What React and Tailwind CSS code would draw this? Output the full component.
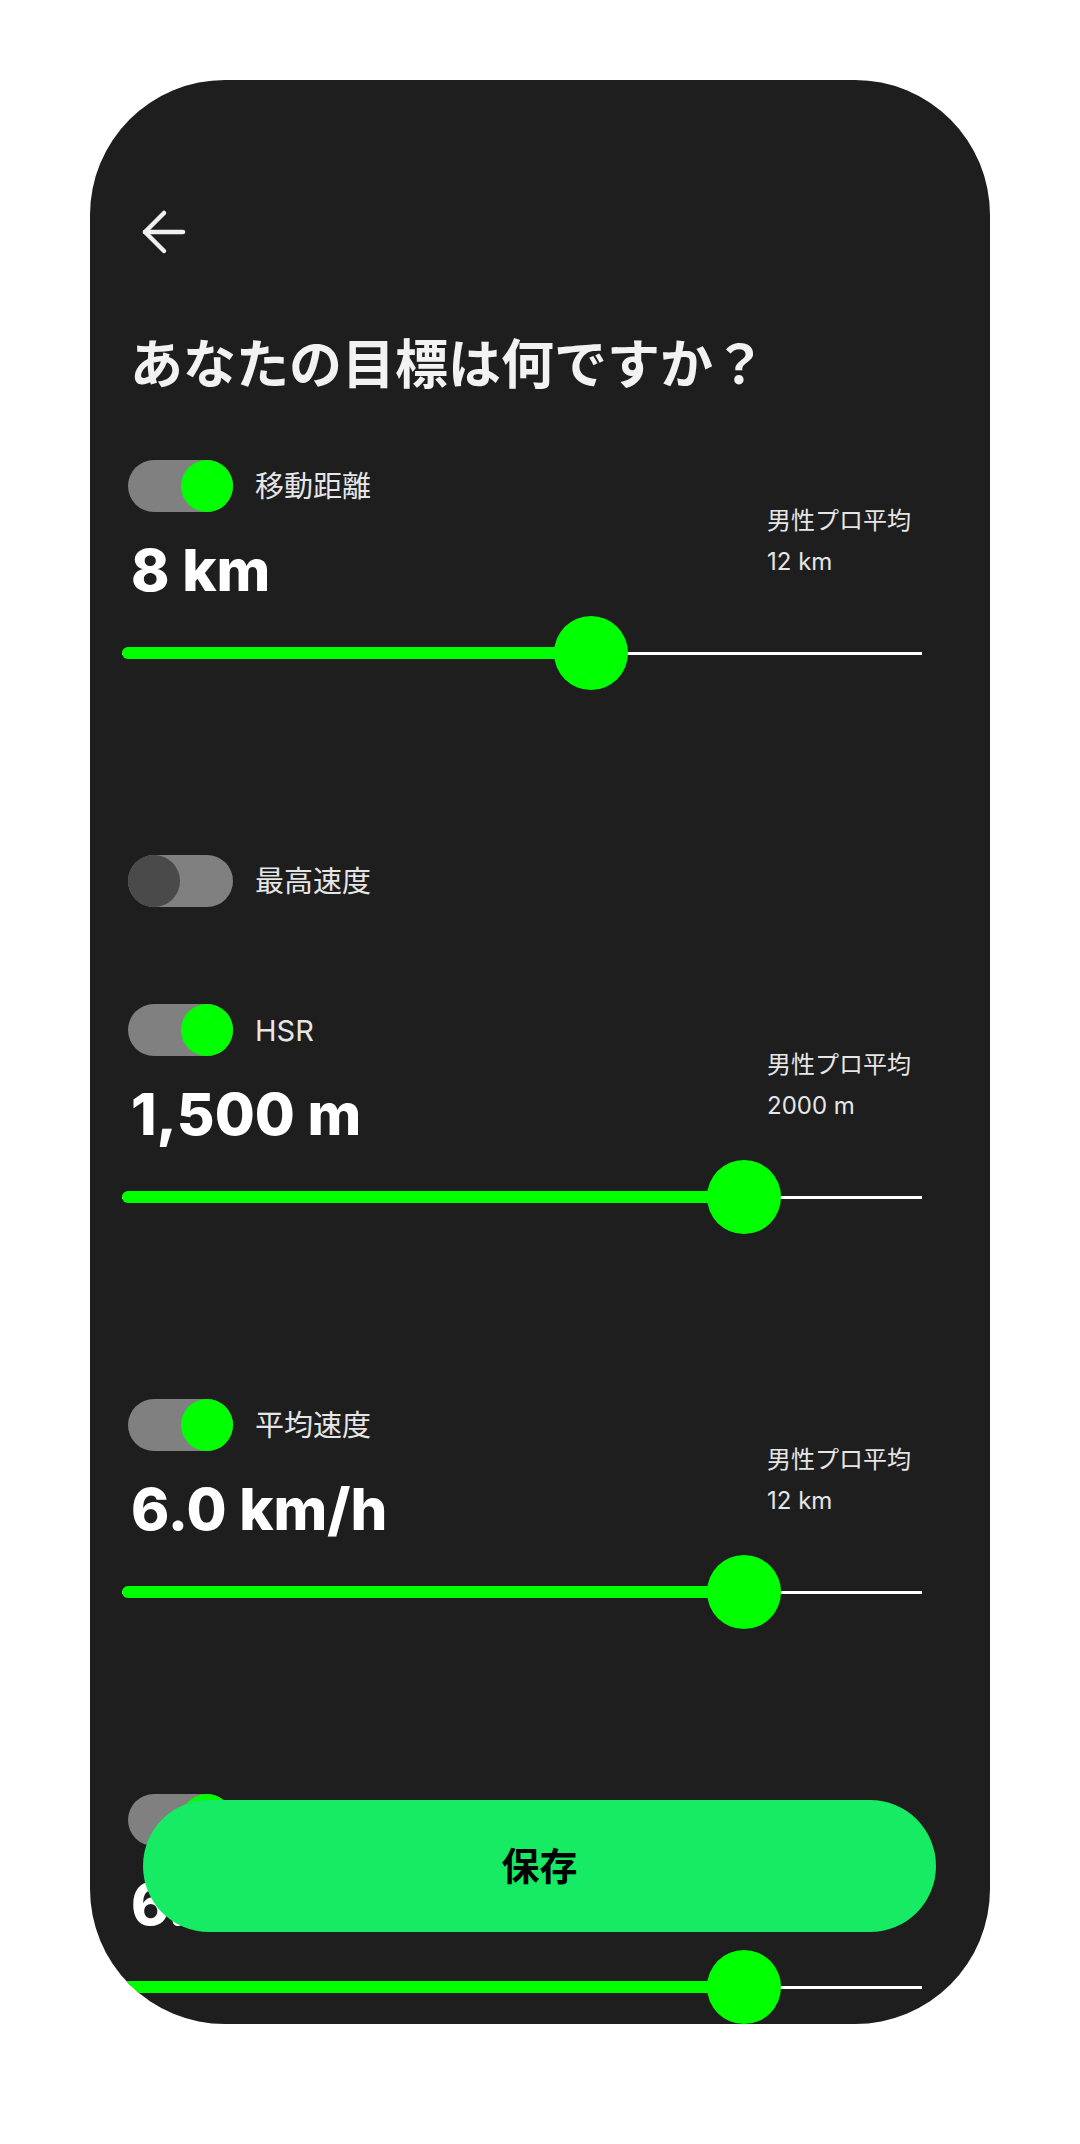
import React from "react";

const goals = [
  { label: "移動距離", enabled: true, value: "8 km", avg: "12 km", ratio: 0.586 },
  { label: "最高速度", enabled: false },
  { label: "HSR", enabled: true, value: "1,500 m", avg: "2000 m", ratio: 0.778 },
  { label: "平均速度", enabled: true, value: "6.0 km/h", avg: "12 km", ratio: 0.778 },
  { label: "加速回数", enabled: true, value: "6.0 km/h", avg: "12 km", ratio: 0.778 },
];

const font = { fontFamily: '"Inter", "Noto Sans CJK JP", sans-serif' };

function Toggle({ on }) {
  return (
    <div className={`flex h-[52px] w-[105px] rounded-full bg-[#808080] ${on ? "justify-end" : "justify-start"}`}>
      <div className={`h-[52px] w-[52px] rounded-full ${on ? "bg-[#00ff00]" : "bg-[#4a4a4a]"}`} />
    </div>
  );
}

function Slider({ ratio }) {
  const pct = `${ratio * 100}%`;
  return (
    <div className="relative mt-[18px] h-[74px]">
      <div className="absolute left-0 right-0 top-[36px] h-[3px] bg-white" />
      <div className="absolute left-0 top-[31px] h-[12px] rounded-full bg-[#00ff00]" style={{ width: pct }} />
      <div
        className="absolute top-0 h-[74px] w-[74px] -translate-x-1/2 rounded-full bg-[#00ff00]"
        style={{ left: pct }}
      />
    </div>
  );
}

function GoalSection({ goal }) {
  if (!goal.enabled) {
    return (
      <div className="h-[149px]">
        <div className="ml-[6px] flex items-center gap-[22px]">
          <Toggle on={false} />
          <span className="text-[29px] leading-[29px] text-[#e6e6e6]">{goal.label}</span>
        </div>
      </div>
    );
  }

  return (
    <div className="h-[395px]">
      <div className="flex">
        <div className="flex-1">
          <div className="ml-[6px] flex items-center gap-[22px]">
            <Toggle on />
            <span className="text-[29px] leading-[29px] text-[#e6e6e6]">{goal.label}</span>
          </div>
          <div className="mt-[30px] pl-[9px] text-[58px] font-extrabold leading-[56px] text-white">
            {goal.value}
          </div>
        </div>
        <div className="w-[155px] pt-[49px] text-[#e6e6e6]">
          <div className="text-[24px] leading-[24px]">男性プロ平均</div>
          <div className="mt-[17px] text-[24px] leading-[24px]">{goal.avg}</div>
        </div>
      </div>
      <Slider ratio={goal.ratio} />
    </div>
  );
}

export default function App() {
  return (
    <div className="min-h-[2144px] bg-white pt-[80px]" style={font}>
      <div className="relative mx-auto h-[1944px] w-[900px] overflow-hidden rounded-[135px] bg-[#1e1e1e]">
        <div className="pl-[32px] pr-[68px] pt-[128px]">
          <button className="ml-[18px] block h-[48px] w-[48px]">
            <svg viewBox="0 0 48 48" className="h-[48px] w-[48px]" fill="none" stroke="#f0f0f0" strokeWidth="4.5" strokeLinecap="round" strokeLinejoin="round">
              <path d="M43 24H5" />
              <path d="M24 5 5 24l19 19" />
            </svg>
          </button>

          <h1 className="mt-[83px] pl-[8px] text-[53px] font-bold leading-[52px] text-[#f2f2f2]">
            あなたの目標は何ですか？
          </h1>

          <div className="mt-[69px]">
            {goals.map((goal, i) => (
              <GoalSection key={i} goal={goal} />
            ))}
          </div>
        </div>

        <button className="absolute bottom-[92px] left-[53px] right-[54px] flex h-[132px] items-center justify-center rounded-full bg-[#16eb63] text-[38px] font-bold text-black">
          保存
        </button>
      </div>
    </div>
  );
}
